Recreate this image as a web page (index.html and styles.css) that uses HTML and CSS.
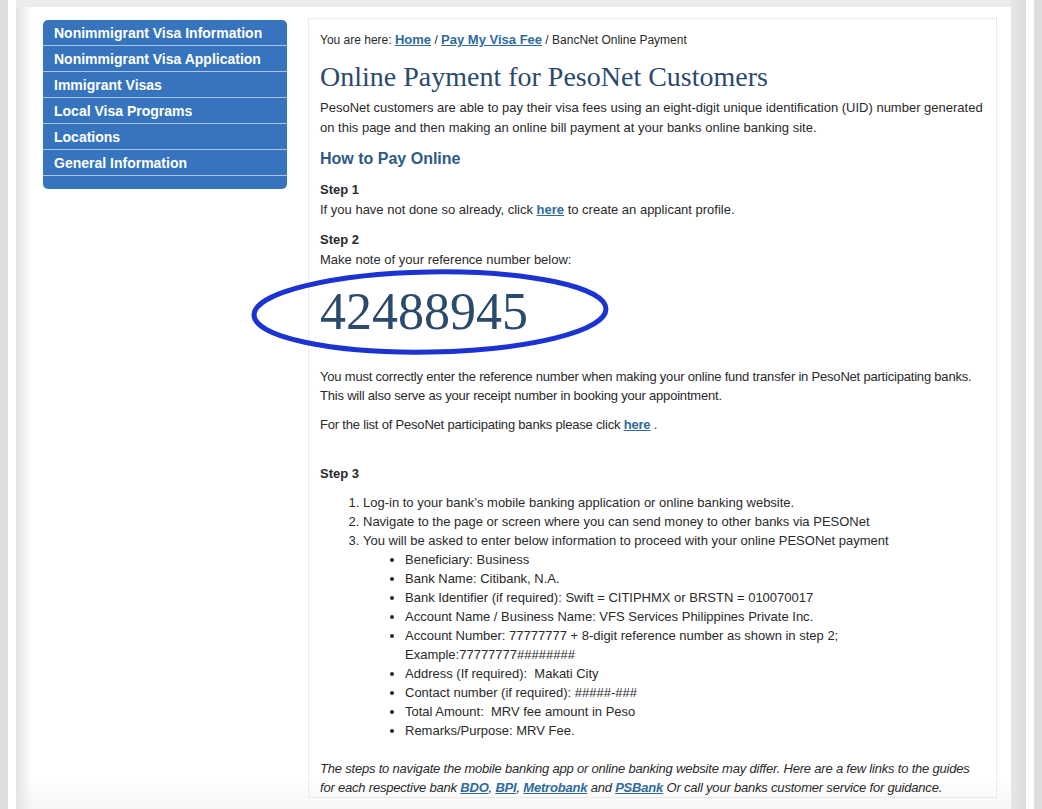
FILE: index.html
```html
<!DOCTYPE html>
<html lang="en">
<head>
    <meta charset="UTF-8">
    <meta name="viewport" content="width=device-width, initial-scale=1.0">
    <title>Online Payment for PesoNet Customers</title>
    <link rel="stylesheet" href="styles.css">
</head>
<body>
    <div class="frame">
        <div class="rail"></div>
        <div class="gutter"></div>

        <div class="page">
            <nav class="sidenav">
                <a href="#" class="sidenav-item">Nonimmigrant Visa Information</a>
                <a href="#" class="sidenav-item">Nonimmigrant Visa Application</a>
                <a href="#" class="sidenav-item">Immigrant Visas</a>
                <a href="#" class="sidenav-item">Local Visa Programs</a>
                <a href="#" class="sidenav-item">Locations</a>
                <a href="#" class="sidenav-item">General Information</a>
                <div class="sidenav-foot"></div>
            </nav>

            <main class="content">
                <p class="breadcrumb">
                    You are here: <a href="#">Home</a> / <a href="#">Pay My Visa Fee</a> / BancNet Online Payment
                </p>

                <h1>Online Payment for PesoNet Customers</h1>

                <p class="lead">PesoNet customers are able to pay their visa fees using an eight-digit unique identification (UID) number generated on this page and then making an online bill payment at your banks online banking site.</p>

                <h2>How to Pay Online</h2>

                <p class="step">
                    <strong>Step 1</strong><br>
                    If you have not done so already, click <a href="#">here</a> to create an applicant profile.
                </p>

                <p class="step">
                    <strong>Step 2</strong><br>
                    Make note of your reference number below:
                </p>

                <div class="refnum">
                    42488945
                    <svg class="circled" width="362" height="90" viewBox="0 0 362 90">
                        <ellipse cx="180" cy="45" rx="176" ry="40" transform="rotate(-1 180 45)" fill="none" stroke="#1b33d3" stroke-width="5"/>
                    </svg>
                </div>

                <p class="note">You must correctly enter the reference number when making your online fund transfer in PesoNet participating banks. This will also serve as your receipt number in booking your appointment.</p>

                <p class="note">For the list of PesoNet participating banks please click <a href="#">here</a> .</p>

                <p class="step step-3"><strong>Step 3</strong></p>

                <ol class="steps">
                    <li>Log-in to your bank’s mobile banking application or online banking website.</li>
                    <li>Navigate to the page or screen where you can send money to other banks via PESONet</li>
                    <li>You will be asked to enter below information to proceed with your online PESONet payment
                        <ul class="details">
                            <li>Beneficiary: Business</li>
                            <li>Bank Name: Citibank, N.A.</li>
                            <li>Bank Identifier (if required): Swift = CITIPHMX or BRSTN = 010070017</li>
                            <li>Account Name / Business Name: VFS Services Philippines Private Inc.</li>
                            <li>Account Number: 77777777 + 8-digit reference number as shown in step 2;<br>Example:77777777########</li>
                            <li>Address (If required):&nbsp; Makati City</li>
                            <li>Contact number (if required): #####-###</li>
                            <li>Total Amount:&nbsp; MRV fee amount in Peso</li>
                            <li>Remarks/Purpose: MRV Fee.</li>
                        </ul>
                    </li>
                </ol>

                <p class="guides">The steps to navigate the mobile banking app or online banking website may differ. Here are a few links to the guides for each respective bank <a href="#">BDO</a>, <a href="#">BPI</a>, <a href="#">Metrobank</a> and <a href="#">PSBank</a> Or call your banks customer service for guidance.</p>
            </main>
        </div>

        <div class="rail rail-inner"></div>
        <div class="gutter"></div>
        <div class="rail"></div>
    </div>
</body>
</html>
```

FILE: styles.css
```css
html, body {
    margin: 0;
    padding: 0;
}
body {
    font-family: "Liberation Sans", Arial, sans-serif;
    font-size: 13px;
    color: #2a2a2a;
    background: #fff;
}
a {
    color: #2f6a9c;
    font-weight: bold;
}
.frame {
    display: flex;
    min-height: 809px;
}
.rail {
    width: 8px;
    background: #dedede;
}
.rail-inner {
    width: 15px;
    background: linear-gradient(to right, #e6e6e6, #dcdcdc);
}
.gutter {
    width: 8px;
    background: #fff;
}
.page {
    flex: 1;
    display: flex;
    align-items: flex-start;
    gap: 21px;
    padding: 11px 14px 0 27px;
    border-top: 7px solid #ececec;
    background:
        linear-gradient(to right, #e4e4e4, rgba(255,255,255,0) 16px),
        linear-gradient(to bottom, #fff 770px, #f6f6f6 802px);
}

/* left navigation */
.sidenav {
    width: 244px;
    margin-top: 2px;
    background: #3674bd;
    border-radius: 5px;
    overflow: hidden;
}
.sidenav-item {
    display: block;
    height: 25px;
    line-height: 26px;
    padding-left: 11px;
    border-bottom: 1px solid #a9c4e4;
    color: #fff;
    font-size: 14px;
    text-decoration: none;
}
.sidenav-foot {
    height: 13px;
}

/* main column */
.content {
    flex: 1;
    border: 1px dotted #d9d9d9;
    padding: 12px 11px 0 11px;
}
.content p {
    margin: 0;
    line-height: 19px;
}
.breadcrumb {
    font-size: 12px;
    line-height: 18px !important;
}
.breadcrumb a {
    font-size: 13px;
}
h1 {
    margin: 11px 0 0;
    font-family: "Liberation Serif", "Times New Roman", serif;
    font-weight: normal;
    font-size: 28px;
    line-height: 34px;
    color: #2b4a6c;
}
.lead {
    margin-top: 4px !important;
    line-height: 20px !important;
}
h2 {
    margin: 11px 0 0;
    font-size: 16px;
    line-height: 20px;
    color: #2d5a86;
}
.step {
    margin-top: 11px !important;
    line-height: 20px !important;
}
.step + .step {
    margin-top: 10px !important;
}
.refnum {
    position: relative;
    margin-top: 12px;
    font-family: "Liberation Serif", "Times New Roman", serif;
    font-size: 52px;
    line-height: 60px;
    color: #2b4a6c;
}
.circled {
    position: absolute;
    left: -70px;
    top: -15px;
}
.note {
    margin-top: 10px !important;
    letter-spacing: -0.2px;
}
.refnum + .note {
    margin-top: 25px !important;
}
.step-3 {
    margin-top: 30px !important;
    line-height: 19px !important;
}
.steps {
    margin: 10px 0 0;
    padding-left: 43px;
    line-height: 19px;
}
.details {
    margin: 0;
    padding-left: 42px;
    list-style: disc;
}
.guides {
    margin-top: 19px !important;
    font-style: italic;
    letter-spacing: -0.2px;
}
```
